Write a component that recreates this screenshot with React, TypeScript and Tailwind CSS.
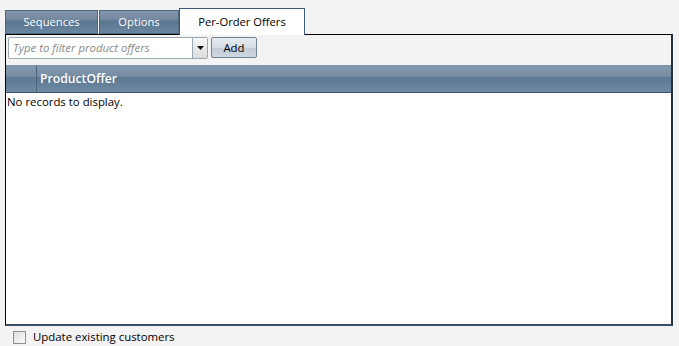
const font = { fontFamily: '"Open Sans", "Segoe UI", sans-serif' };

const tabBg = 'bg-[linear-gradient(to_bottom,#8397ab_0%,#7388a0_40%,#5b7590_45%,#6a86a0_100%)]';

export default function App() {
  return (
    <div className="w-[679px] h-[346px] bg-[#f3f3f3] text-[11.4px] text-black overflow-hidden" style={font}>
      {/* Tabs */}
      <div className="flex items-end h-[34px] pl-[5px] text-[11.2px]">
        <div className={`w-[93px] h-[24px] flex items-center justify-center text-white border border-[#4e6780] ${tabBg}`}>
          Sequences
        </div>
        <div className={`w-[80px] h-[24px] flex items-center justify-center text-white border border-[#4e6780] ml-px ${tabBg}`}>
          Options
        </div>
        <div className="w-[126px] h-[27px] -mb-px relative z-10 flex items-center justify-center bg-white border border-b-0 border-[#3d5a78]">
          Per-Order Offers
        </div>
      </div>

      {/* Panel */}
      <div className="ml-[5px] w-[668px] h-[292px] border border-black border-r-[#22303d] border-b-[#3a4d60] border-r-2 border-b-2 flex flex-col">
        <div className="flex items-start gap-[3px] px-[2px] h-[30px] pt-[2px]">
          <div className="flex h-[22px] w-[200px] bg-white border border-[#9aa7b4] rounded-[2px]">
            <span className="flex-1 pl-[4px] flex items-center italic text-[#8a8a8a]">Type to filter product offers</span>
            <span className="w-[15px] flex items-center justify-center border-l border-[#9aa7b4] bg-[linear-gradient(to_bottom,#f7f7f7,#dcdcdc)]">
              <svg width="7" height="4" viewBox="0 0 7 4"><path d="M0 0h7L3.5 4z" fill="#111" /></svg>
            </span>
          </div>
          <div className="w-[46px] h-[21px] flex items-center justify-center border border-[#6f8195] rounded-[2px] bg-[linear-gradient(to_bottom,#e6ebf0_0%,#d7dee5_50%,#c2ccd6_52%,#cfd7df_100%)]">
            Add
          </div>
        </div>
        <div className="flex h-[28px] border-t border-[#7b8ea2] border-b border-b-[#3f546a] bg-[linear-gradient(to_bottom,#8599ae_0%,#768ca3_40%,#5c7792_45%,#6e8aa3_100%)] text-white text-[12.2px]">
          <div className="w-[31px] border-r border-[#4a627a]" />
          <div className="flex items-center pl-[3px] font-semibold">ProductOffer</div>
        </div>
        <div className="flex-1 bg-white pl-px">No records to display.</div>
      </div>

      {/* Footer */}
      <div className="flex items-center h-[22px] pl-[13px]">
        <span className="w-[13px] h-[13px] border border-[#8e8f8f] bg-[linear-gradient(135deg,#dcdcdc,#fbfbfb)]" />
        <span className="ml-[7px]">Update existing customers</span>
      </div>
    </div>
  );
}
